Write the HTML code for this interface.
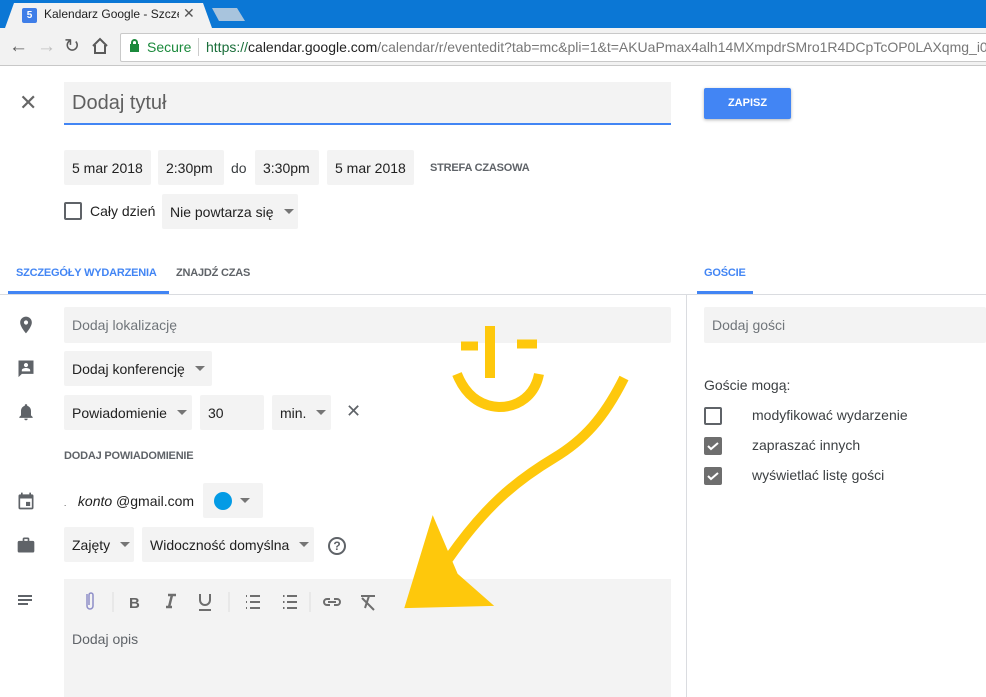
<!DOCTYPE html>
<html><head><meta charset="utf-8"><style>
*{margin:0;padding:0;box-sizing:border-box}
body{width:986px;height:697px;overflow:hidden;position:relative;background:#fff;font-family:"Liberation Sans",sans-serif;color:#3c4043;font-size:14px}
.a{position:absolute}
.chip{position:absolute;background:#f3f3f3;border-radius:2px;display:flex;align-items:center;padding-left:8px;font-size:14px;color:#212121}
.dd{display:inline-block;width:0;height:0;border-left:5px solid transparent;border-right:5px solid transparent;border-top:5px solid #757575;margin-left:10px}
.cap{font-size:11px;font-weight:bold;color:#5f6368;letter-spacing:-.2px}
.cb{position:absolute;width:18px;height:18px;border:2px solid #5f6368;border-radius:2px}
.cbk{position:absolute;width:18px;height:18px;background:#6e6e6e;border-radius:2px}
</style></head><body>
<!-- chrome -->
<div class="a" style="left:0;top:0;width:986px;height:28px;background:#0b77d5"></div>
<svg class="a" style="left:0;top:0" width="260" height="30"><path d="M5 28 L14 3 H203 L212 28 Z" fill="#f2f2f2"/><path d="M212 8 H237 L245 21 H219 Z" fill="#a8c4dd"/></svg>
<div class="a" style="left:22px;top:8px;width:15px;height:15px;background:#3f7ee8;border-radius:2px;color:#fff;font-size:10px;text-align:center;line-height:15px;font-weight:bold">5</div>
<div class="a" style="left:44px;top:7px;font-size:12px;color:#222;width:135px;overflow:hidden;white-space:nowrap">Kalendarz Google - Szcze</div>
<div class="a" style="left:183px;top:5px;font-size:14px;color:#555">✕</div>
<div class="a" style="left:0;top:28px;width:986px;height:38px;background:#f2f2f2;border-bottom:1px solid #c8c8c8"></div>
<div class="a" style="left:9px;top:36px;font-size:19px;color:#5a5a5a">←</div>
<div class="a" style="left:37px;top:36px;font-size:19px;color:#c0c0c0">→</div>
<div class="a" style="left:64px;top:35px;font-size:19px;color:#5a5a5a">↻</div>
<svg class="a" style="left:91px;top:37px" width="18" height="18"><path d="M2 9 L9 2 L16 9 M4 8 V16 H14 V8" fill="none" stroke="#5a5a5a" stroke-width="2"/></svg>
<div class="a" style="left:120px;top:33px;width:880px;height:29px;background:#fff;border:1px solid #c9c9c9;border-radius:2px"></div>
<div class="a" style="left:130px;top:44px;width:9px;height:8px;background:#1b8a3c"></div>
<div class="a" style="left:131px;top:39px;width:7px;height:7px;border:2px solid #1b8a3c;border-bottom:none;border-radius:4px 4px 0 0"></div>
<div class="a" style="left:147px;top:39px;font-size:14px;color:#1b8a3c">Secure</div>
<div class="a" style="left:198px;top:38px;width:1px;height:18px;background:#ccc"></div>
<div class="a" style="left:206px;top:39px;font-size:14px;color:#777;white-space:nowrap"><span style="color:#1a6e3a">https://</span><span style="color:#222">calendar.google.com</span>/calendar/r/eventedit?tab=mc&amp;pli=1&amp;t=AKUaPmax4alh14MXmpdrSMro1R4DCpTcOP0LAXqmg_i0</div>

<!-- header -->
<div class="a" style="left:19px;top:90px;font-size:22px;color:#666;font-weight:300">✕</div>
<div class="a" style="left:64px;top:82px;width:607px;height:43px;background:#f3f3f3;border-bottom:2px solid #4285f4"></div>
<div class="a" style="left:72px;top:92px;font-size:20px;color:#5f5f5f">Dodaj tytuł</div>
<div class="a" style="left:704px;top:88px;width:87px;height:31px;background:#4285f4;border-radius:2px;box-shadow:0 1px 3px rgba(0,0,0,.3);color:#fff;font-size:11px;font-weight:bold;text-align:center;line-height:31px">ZAPISZ</div>

<div class="chip" style="left:64px;top:150px;width:87px;height:35px">5 mar 2018</div>
<div class="chip" style="left:158px;top:150px;width:66px;height:35px">2:30pm</div>
<div class="a" style="left:231px;top:160px;color:#3c4043">do</div>
<div class="chip" style="left:255px;top:150px;width:64px;height:35px">3:30pm</div>
<div class="chip" style="left:327px;top:150px;width:87px;height:35px">5 mar 2018</div>
<div class="a cap" style="left:430px;top:162px">STREFA CZASOWA</div>
<div class="cb" style="left:64px;top:202px"></div>
<div class="a" style="left:90px;top:203px;color:#212121">Cały dzień</div>
<div class="chip" style="left:162px;top:194px;width:136px;height:35px">Nie powtarza się<span class="dd"></span></div>

<!-- tabs -->
<div class="a cap" style="left:16px;top:267px;color:#4285f4">SZCZEGÓŁY WYDARZENIA</div>
<div class="a" style="left:8px;top:291px;width:161px;height:3px;background:#4285f4"></div>
<div class="a cap" style="left:176px;top:267px">ZNAJDŹ CZAS</div>
<div class="a cap" style="left:704px;top:267px;color:#4285f4">GOŚCIE</div>
<div class="a" style="left:697px;top:291px;width:56px;height:3px;background:#4285f4"></div>
<div class="a" style="left:0;top:294px;width:986px;height:1px;background:#dadce0"></div>
<div class="a" style="left:686px;top:294px;width:1px;height:403px;background:#dadce0"></div>

<!-- left icons -->
<svg class="a" style="left:16px;top:315px" width="20" height="20" viewBox="0 0 24 24" fill="#5f6368"><path d="M12 2C8.1 2 5 5.1 5 9c0 5.2 7 13 7 13s7-7.8 7-13c0-3.9-3.1-7-7-7zm0 9.5a2.5 2.5 0 1 1 0-5 2.5 2.5 0 0 1 0 5z"/></svg>
<svg class="a" style="left:16px;top:358px" width="20" height="20" viewBox="0 0 24 24" fill="#5f6368"><path d="M3 3h18v16H7l-4 4zM12 6a2.5 2.5 0 1 0 0 5 2.5 2.5 0 0 0 0-5zM7 16h10v-1.5c0-1.7-3.3-2.5-5-2.5s-5 .8-5 2.5z"/></svg>
<svg class="a" style="left:16px;top:402px" width="20" height="20" viewBox="0 0 24 24" fill="#5f6368"><path d="M12 22a2 2 0 0 0 2-2h-4a2 2 0 0 0 2 2zm6-6v-5c0-3.1-1.6-5.6-4.5-6.3V4a1.5 1.5 0 0 0-3 0v.7C7.6 5.4 6 7.9 6 11v5l-2 2v1h16v-1z"/></svg>
<svg class="a" style="left:16px;top:491px" width="20" height="20" viewBox="0 0 24 24" fill="#5f6368"><path d="M19 4h-1V2h-2v2H8V2H6v2H5a2 2 0 0 0-2 2v14a2 2 0 0 0 2 2h14a2 2 0 0 0 2-2V6a2 2 0 0 0-2-2zm0 16H5V9h14zM12 13h5v5h-5z"/></svg>
<svg class="a" style="left:16px;top:535px" width="20" height="20" viewBox="0 0 24 24" fill="#5f6368"><path d="M10 3h4a2 2 0 0 1 2 2v2h4a2 2 0 0 1 2 2v10a2 2 0 0 1-2 2H4a2 2 0 0 1-2-2V9a2 2 0 0 1 2-2h4V5a2 2 0 0 1 2-2zm4 4V5h-4v2z"/></svg>
<svg class="a" style="left:17px;top:594px" width="18" height="14"><path d="M1 2h14M1 6h14M1 10h10" stroke="#5f6368" stroke-width="2"/></svg>

<!-- fields -->
<div class="chip" style="left:64px;top:307px;width:607px;height:36px;color:#70757a">Dodaj lokalizację</div>
<div class="chip" style="left:64px;top:351px;width:148px;height:35px">Dodaj konferencję<span class="dd"></span></div>
<div class="chip" style="left:64px;top:395px;width:128px;height:35px">Powiadomienie<span class="dd"></span></div>
<div class="chip" style="left:200px;top:395px;width:64px;height:35px">30</div>
<div class="chip" style="left:272px;top:395px;width:59px;height:35px">min.<span class="dd"></span></div>
<div class="a" style="left:346px;top:401px;font-size:18px;color:#5f6368">✕</div>
<div class="a cap" style="left:64px;top:450px">DODAJ POWIADOMIENIE</div>
<div class="a" style="left:64px;top:493px;color:#212121"><span style="font-size:8px">.</span>&nbsp;&nbsp;&nbsp;<i>konto</i> @gmail.com</div>
<div class="chip" style="left:203px;top:483px;width:60px;height:35px;padding-left:11px"><span style="display:inline-block;width:18px;height:18px;border-radius:50%;background:#039be5"></span><span class="dd" style="margin-left:8px"></span></div>
<div class="chip" style="left:64px;top:527px;width:70px;height:35px">Zajęty<span class="dd"></span></div>
<div class="chip" style="left:142px;top:527px;width:172px;height:35px">Widoczność domyślna<span class="dd"></span></div>
<div class="a" style="left:328px;top:537px;width:18px;height:18px;border:2px solid #5f6368;border-radius:50%;font-size:12px;text-align:center;line-height:14px;color:#5f6368;font-weight:bold">?</div>

<!-- description -->
<div class="a" style="left:64px;top:579px;width:607px;height:118px;background:#f3f3f3"></div>
<svg class="a" style="left:80px;top:590px" width="320" height="24" fill="none" stroke="#6e6e6e">
<path d="M7 4v12a3 3 0 0 0 6 0V5a2 2 0 0 0-4 0v10" stroke="#8e8ec8" stroke-width="1.5"/>
<path d="M33 2v20M149 2v20M230 2v20" stroke="#ddd"/>
<text x="49" y="18" fill="#666" stroke="none" font-weight="bold" font-size="15" font-family="Liberation Sans">B</text>
<path d="M88 5h8M92 5l-3 12M86 17h6" stroke-width="2.5"/>
<path d="M121 4v6a5 5 0 0 0 10 0V4" transform="translate(-1 0)" stroke-width="2"/><path d="M119 20h12" stroke-width="2"/>
<path d="M170 6h10M170 12h10M170 18h10M166 6h1M166 12h1M166 18h1" stroke-width="2"/>
<path d="M207 6h10M207 12h10M207 18h10M203 6h1.5M203 12h1.5M203 18h1.5" stroke-width="2"/>
<path d="M250 9h-3a3 3 0 0 0 0 6h3M254 9h3a3 3 0 0 1 0 6h-3M248 12h8" stroke-width="2"/>
<path d="M281 6h14M289 6l-4 12M282 8l12 12" stroke-width="2"/>
</svg>
<div class="a" style="left:72px;top:631px;color:#5f6368">Dodaj opis</div>

<!-- right panel -->
<div class="chip" style="left:704px;top:307px;width:282px;height:36px;color:#70757a">Dodaj gości</div>
<div class="a" style="left:704px;top:377px;color:#3c4043">Goście mogą:</div>
<div class="cb" style="left:704px;top:407px"></div>
<div class="a" style="left:752px;top:407px;color:#3c4043">modyfikować wydarzenie</div>
<div class="cbk" style="left:704px;top:437px"></div>
<div class="a" style="left:752px;top:437px;color:#3c4043">zapraszać innych</div>
<div class="cbk" style="left:704px;top:467px"></div>
<div class="a" style="left:752px;top:467px;color:#3c4043">wyświetlać listę gości</div>
<svg class="a" style="left:704px;top:437px" width="18" height="48" fill="none" stroke="#fff" stroke-width="2"><path d="M4 9l3 3 7-6M4 39l3 3 7-6"/></svg>

<!-- yellow drawing -->
<svg class="a" style="left:0;top:0" width="986" height="697" fill="none" stroke="#fec80c" stroke-width="10">
<path d="M490 326V378"/>
<path d="M461 346h17M517 344h20" stroke-width="9"/>
<path d="M457 374c8 20 22 32 42 33c20 0 36-12 40-33"/>
<path d="M624 378c-20 40-40 62-70 80c-40 24-70 50-105 100c-6 6-10 12-14 16"/>
<path d="M433 521L407 606L489 604L456 575Z" fill="#fec80c" stroke-width="4"/>
</svg>
</body></html>
